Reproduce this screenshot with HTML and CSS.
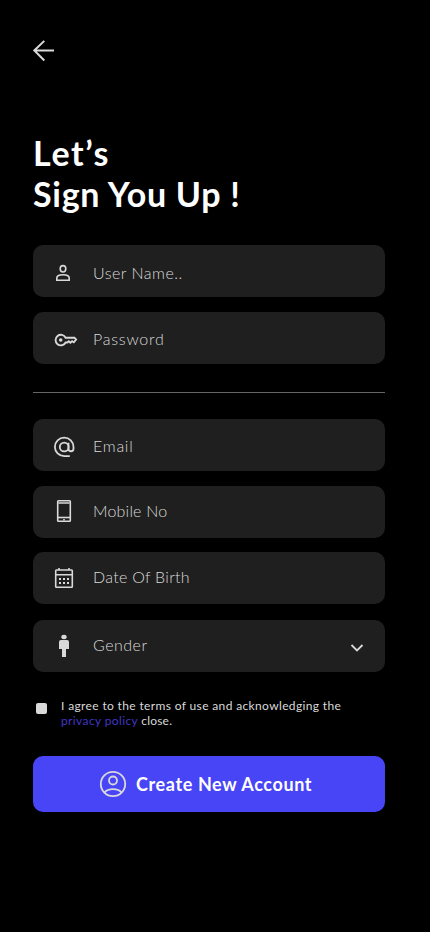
FILE: index.html
```html
<!DOCTYPE html>
<html lang="en">
<head>
<meta charset="utf-8">
<meta name="viewport" content="width=device-width, initial-scale=1">
<title>Sign Up</title>
<link rel="stylesheet" href="styles.css">
</head>
<body>
<main class="screen">
  <a class="back" aria-label="Back"><svg width="22" height="22" viewBox="0 0 22 22"><path d="M21 10.5H2M11.3.9 1.3 10.5l10 10"/></svg></a>
  <h1 class="title"><span class="title-first">Let’s</span><br><span class="title-second">Sign You Up !</span></h1>
  <form class="form">
    <div class="group">
      <div class="field low">
        <svg class="icon" viewBox="0 0 28 28"><ellipse cx="13" cy="11.8" rx="2.8" ry="3.2"/><path d="M6.8 23.3v-2.2c0-2.3 3-3.4 6.2-3.4s6.2 1.1 6.2 3.4v2.2z"/></svg>
        <span class="label user">User Name..</span>
      </div>
      <div class="field lowish">
        <svg class="icon key" viewBox="0 0 28 28"><path d="M15.6 13.7h8.800l1.700 1.900-2.300 2.700-1.700-1.100-1.700 1.500-1.600-1.500-1.500 1.300h-1.700a5.300 5.300 0 1 1 0-4.800z"/><circle class="solid" cx="10.7" cy="16" r="1.8"/></svg>
        <span class="label password">Password</span>
      </div>
    </div>
    <hr class="divider">
    <div class="group details">
      <div class="field lowish">
        <svg class="icon at" viewBox="0 0 28 28"><path d="M19.8 25.2h-5.6a9.3 9.3 0 1 1 9.3-9.3v1.5c0 3.8-5 3.8-5 0v-5.6"/><circle cx="14.2" cy="16" r="4.4"/></svg>
        <span class="label email">Email</span>
      </div>
      <div class="field">
        <svg class="icon phone" viewBox="0 0 28 28"><rect x="7.7" y="2.7" width="12.6" height="20.6" rx=".7"/><path d="M8 5h12" class="band"/><path d="M8 19.5h12"/><path d="M13.2 21.7h1.6"/></svg>
        <span class="label mobile">Mobile No</span>
      </div>
      <div class="field">
        <svg class="icon" viewBox="0 0 28 28"><rect x="5.7" y="6" width="16.6" height="17.3" rx=".7"/><path d="M6 10.8h16M9 4v2M19 4v2"/><path class="dots" d="M9 15h2m2 0h2m2 0h2M9 19h2m2 0h2m2 0h2"/></svg>
        <span class="label birth">Date Of Birth</span>
      </div>
      <div class="field gender-field">
        <svg class="icon" viewBox="0 0 28 28"><g class="solid"><ellipse cx="14" cy="5" rx="2.7" ry="2.2"/><path d="M11 8h6q2 0 2 2v7h-3v8h-4v-8H9v-7q0-2 2-2z"/></g></svg>
        <span class="label gender">Gender</span>
        <svg class="chevron" width="14" height="10" viewBox="0 0 14 10"><path d="m1.5 2 5.5 5.5L12.5 2"/></svg>
      </div>
    </div>
    <label class="terms"><span class="box"></span><span class="terms-text"><span class="terms-line">I agree to the terms of use and acknowledging the</span><br><a>privacy policy</a> <span class="close">close.</span></span></label>
    <button class="submit" type="button">
      <svg width="28" height="28" viewBox="0 0 28 28"><circle cx="14" cy="14" r="12.2"/><circle cx="14" cy="10.5" r="4"/><path d="M5.5 22.5c3.5-4.5 13.5-4.5 17 0"/></svg>
      <span>Create New Account</span>
    </button>
  </form>
</main>
</body>
</html>
```
FILE: styles.css
```css
* { box-sizing: border-box; }
body { margin: 0; background: #000; color: #fff; font-family: Lato, "Open Sans", sans-serif; }
.screen { width: 430px; height: 932px; padding: 40px 45px 0 33px; overflow: hidden; }
svg { display: block; flex: none; fill: none; stroke: #d9d9d9; }
.back { display: block; height: 22px; }
.back svg { stroke-width: 2; }
.title { margin: 70px 0 0; font-size: 34px; line-height: 41px; font-weight: 700; white-space: nowrap; }
.title-first { letter-spacing: 1.6px; }
.title-second { letter-spacing: 0.72px; }
.form { margin-top: 31px; }
.group { display: flex; flex-direction: column; gap: 15px; }
.details { gap: 14.5px; }
.field { display: flex; align-items: center; height: 52px; flex: none; padding: 0 21px 0 17px; border-radius: 10px; background: #1f1f1f; }
.gender-field { margin-top: 1px; }
.icon { width: 28px; height: 28px; stroke-width: 1.6; }
.key { stroke-width: 1.9; }
.at { stroke-width: 1.8; }
.solid { fill: #d9d9d9; stroke: none; }
.band { stroke-width: 2; stroke: #aaa; }
.dots { stroke-width: 2; }
.label { margin-left: 15px; padding-bottom: 2px; font-size: 16px; line-height: 20px; font-weight: 300; color: #d9d9d9; white-space: nowrap; }
.low .label { padding: 4px 0 0; }
.lowish .label { padding: 1px 0 0; }
.user { letter-spacing: 0.5px; }
.password { letter-spacing: 0.78px; }
.email { letter-spacing: 0.75px; }
.mobile { letter-spacing: 0.2px; }
.birth { letter-spacing: 0.28px; }
.gender { letter-spacing: 0.5px; }
.chevron { margin: 4px 0 0 auto; stroke-width: 1.8; }
.divider { height: 1px; margin: 28px 0 26px; border: 0; background: #666; }
.terms { display: flex; margin: 26px 0 0 3px; font-size: 12px; line-height: 15px; color: #d9d9d9; }
.box { flex: none; width: 11px; height: 11px; margin: 5px 14px 0 0; border-radius: 2px; background: #d9d9d9; }
.terms-text { white-space: nowrap; }
.terms-line { letter-spacing: 0.36px; }
.terms a { color: #4036c4; letter-spacing: 0.38px; }
.close { letter-spacing: 0.2px; }
.submit { display: flex; align-items: center; width: 352px; height: 56px; margin: 28px 0 0; padding: 0 0 0 66px; border: 0; border-radius: 10px; background: #4845f7; color: #fff; font: 700 18px/22px Lato, "Open Sans", sans-serif; }
.submit svg { stroke-width: 1.8; }
.submit span { margin-left: 9px; padding-top: 1px; white-space: nowrap; letter-spacing: 0.62px; }
```
